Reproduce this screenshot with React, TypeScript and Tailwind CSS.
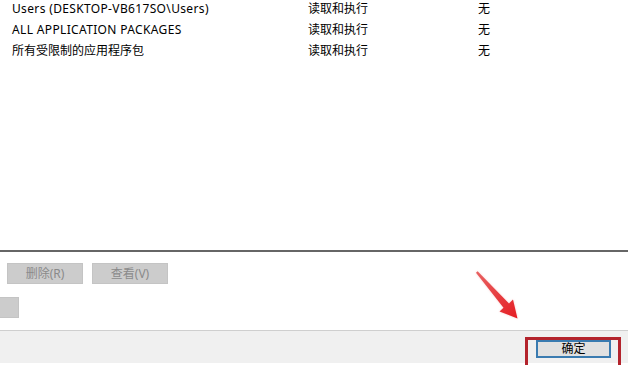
const rows = [
  { name: 'Users (DESKTOP-VB617SO\\Users)', perm: '读取和执行', deny: '无', latin: true },
  { name: 'ALL APPLICATION PACKAGES', perm: '读取和执行', deny: '无', latin: true },
  { name: '所有受限制的应用程序包', perm: '读取和执行', deny: '无', latin: false },
];

const font = { fontFamily: '"Noto Sans", "Noto Sans CJK SC", sans-serif' };

function GreyButton({ label, className = '' }: { label: string; className?: string }) {
  return (
    <div
      className={`h-[21px] flex items-center justify-center bg-[#cccccc] border border-[#c4c4c4] text-[12px] text-[#8a8a8a] ${className}`}
    >
      {label}
    </div>
  );
}

export default function App() {
  return (
    <div className="relative w-[628px] h-[365px] overflow-hidden bg-white text-black" style={font}>
      {/* permission list */}
      <div className="h-[254px] border-b-2 border-[#666666]">
        <div className="-mt-[2px]">
          {rows.map((r) => (
            <div key={r.name} className="h-[21px] flex items-center text-[12px] leading-none">
              <span className={`w-[308px] pl-[12px] ${r.latin ? 'tracking-[0.35px]' : ''}`}>{r.name}</span>
              <span className="w-[170px]">{r.perm}</span>
              <span>{r.deny}</span>
            </div>
          ))}
        </div>
      </div>

      {/* buttons */}
      <div className="h-[78px] flex flex-col pt-[11px] gap-[13px]">
        <div className="flex gap-[9px] pl-[7px]">
          <GreyButton label="删除(R)" className="w-[76px]" />
          <GreyButton label="查看(V)" className="w-[76px]" />
        </div>
        <div className="flex">
          <GreyButton label="" className="w-[19px] border-l-0" />
        </div>
      </div>

      {/* footer */}
      <div className="h-[33px] border-t border-[#cfcfcf] bg-[#f0f0f0] flex justify-end pr-[17px] pt-[9px]">
        <div className="w-[75px] h-[18px] border-2 border-[#3a7bb0] bg-[#e1e1e1] flex items-center justify-center text-[12px] leading-none">
          确定
        </div>
      </div>

      {/* annotation */}
      <div className="absolute left-[525px] top-[337px] w-[96px] h-[34px] border-[3px] border-[#b3232c]" />
      <svg className="absolute left-0 top-0" width="628" height="365">
        <defs>
          <linearGradient id="ar" x1="477" y1="272" x2="517" y2="318" gradientUnits="userSpaceOnUse">
            <stop offset="0" stopColor="#e86060" />
            <stop offset="1" stopColor="#e51e24" />
          </linearGradient>
          <filter id="glow" x="-20%" y="-20%" width="140%" height="140%">
            <feGaussianBlur stdDeviation="1.2" />
          </filter>
        </defs>
        <polygon
          points="476,272.8 477.6,271.2 509,303.4 513,299.5 517.5,318.5 499.5,311.5 503.5,307.8"
          fill="#f3a0a0"
          opacity="0.5"
          filter="url(#glow)"
        />
        <polygon
          points="476,272.8 477.6,271.2 509,303.4 513,299.5 517.5,318.5 499.5,311.5 503.5,307.8"
          fill="url(#ar)"
        />
      </svg>
    </div>
  );
}
